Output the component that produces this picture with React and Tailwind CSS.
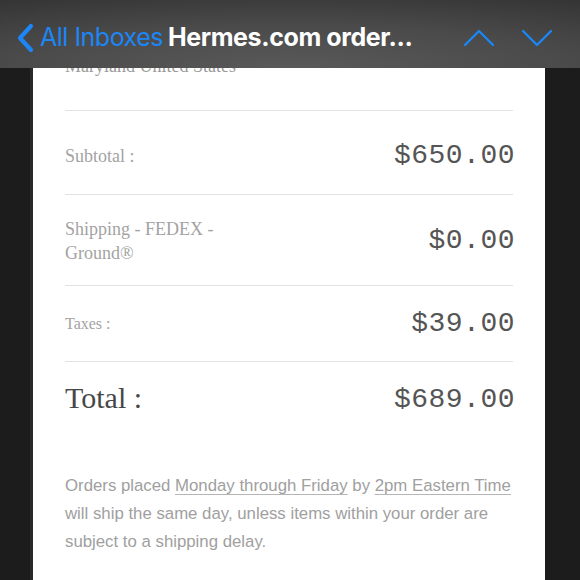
export default function App() {
  const serif = "font-['Liberation_Serif','Times_New_Roman',serif]";
  const mono = "font-['Liberation_Mono','Courier_New',monospace]";
  return (
    <div className="w-[580px] h-[580px] overflow-hidden bg-[#1c1c1c] flex flex-col">
      <div className="relative z-10 h-[68px] shrink-0 flex items-center pt-[7px] bg-[radial-gradient(ellipse_110%_140%_at_50%_100%,#595959_0%,#4a4a4a_45%,#2c2c2c_100%)] font-['Inter','Roboto',sans-serif]">
        <svg width="22" height="30" viewBox="0 0 22 30" className="ml-[15px]">
          <path d="M16 3 L5 15 L16 27" fill="none" stroke="#1c86f4" strokeWidth="4.2" strokeLinecap="round" strokeLinejoin="round" />
        </svg>
        <span className="ml-[3px] text-[#1c86f4] text-[25px] tracking-[-0.5px] leading-none">All Inboxes</span>
        <span className="ml-[5px] text-white text-[25px] font-bold tracking-[-0.4px] leading-none">Hermes.com order...</span>
        <div className="ml-auto flex items-center gap-[26px] mr-[27px]">
          <svg width="32" height="18" viewBox="0 0 32 18">
            <path d="M2 16 L16 2 L30 16" fill="none" stroke="#1c86f4" strokeWidth="2.4" strokeLinecap="round" strokeLinejoin="round" />
          </svg>
          <svg width="32" height="18" viewBox="0 0 32 18">
            <path d="M2 2 L16 16 L30 2" fill="none" stroke="#1c86f4" strokeWidth="2.4" strokeLinecap="round" strokeLinejoin="round" />
          </svg>
        </div>
      </div>
      <div className="flex-1 flex pl-[30px] pr-[35px]">
        <div className="w-[3px] bg-[#2a2a2a]" />
        <div className="flex-1 bg-white overflow-hidden px-[32px]">
          <div className={`${serif} text-[18px] text-[#9a9a9a] leading-[20px] -mt-[12px] h-[54px]`}>Maryland United States</div>
          <div className="border-t border-[#e2e2e2]" />
          <div className="flex items-center justify-between h-[83px] pt-[7px]">
            <span className={`${serif} text-[18px] text-[#a3a3a3]`}>Subtotal :</span>
            <span className={`${mono} text-[28px] text-[#555555] tracking-[0.5px] -mr-[2px]`}>$650.00</span>
          </div>
          <div className="border-t border-[#e2e2e2]" />
          <div className="flex items-center justify-between h-[90px] pt-[1px]">
            <span className={`${serif} text-[18px] text-[#a3a3a3] leading-[24px] w-[160px]`}>Shipping - FEDEX - Ground®</span>
            <span className={`${mono} text-[28px] text-[#555555] tracking-[0.5px] -mr-[2px]`}>$0.00</span>
          </div>
          <div className="border-t border-[#e2e2e2]" />
          <div className="flex items-center justify-between h-[75px] pt-[1px]">
            <span className={`${serif} text-[16px] text-[#a3a3a3]`}>Taxes :</span>
            <span className={`${mono} text-[28px] text-[#555555] tracking-[0.5px] -mr-[2px]`}>$39.00</span>
          </div>
          <div className="border-t border-[#e2e2e2]" />
          <div className="flex items-center justify-between h-[76px]">
            <span className={`${serif} text-[30px] text-[#474747] -mt-[5px]`}>Total :</span>
            <span className={`${mono} text-[28px] text-[#555555] tracking-[0.5px] -mr-[2px]`}>$689.00</span>
          </div>
          <p className="mt-[34px] font-['Liberation_Sans','Arial',sans-serif] text-[16.8px] leading-[28px] text-[#a0a0a0]">
            Orders placed <span className="underline decoration-[#b5b5b5] underline-offset-[3px]">Monday through Friday</span> by <span className="underline decoration-[#b5b5b5] underline-offset-[3px]">2pm Eastern Time</span> will ship the same day, unless items within your order are subject to a shipping delay.
          </p>
        </div>
      </div>
    </div>
  );
}
